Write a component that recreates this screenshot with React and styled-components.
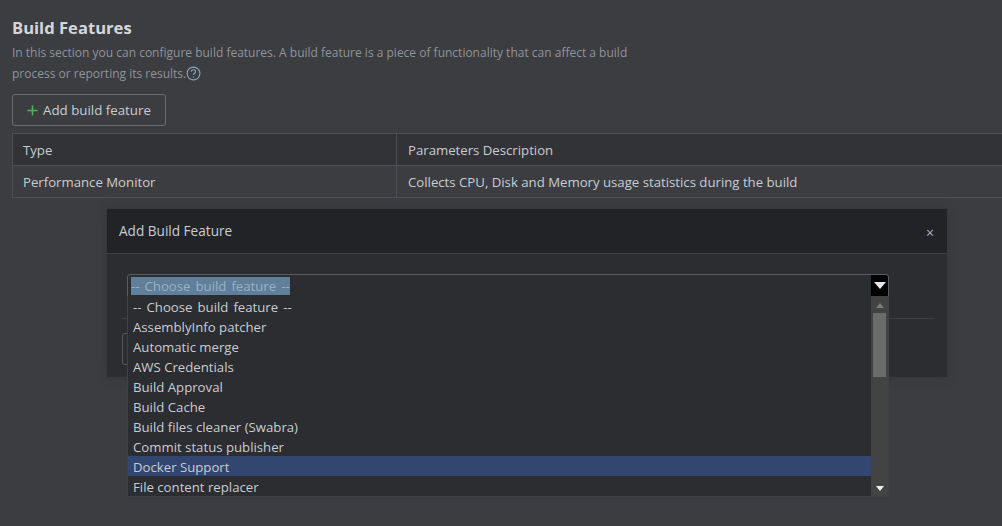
import React from "react";
import styled, { createGlobalStyle } from "styled-components";

const Global = createGlobalStyle`
  html, body { margin: 0; padding: 0; background: #3c3d41; }
  body { font-family: "Open Sans", "Noto Sans", sans-serif; width: 1002px; height: 526px; overflow: hidden; }
  * { box-sizing: border-box; }
`;
const Page = styled.div`position: relative; width: 1002px; height: 526px; padding: 16px 0 0 12px; overflow: hidden; color: #c9ccd2;`;
const Title = styled.h2`margin: 0; font-size: 16.6px; line-height: 24px; font-weight: 700; color: #d4d6db;`;
const Desc = styled.p`margin: 2px 0 0; width: 630px; font-size: 12px; line-height: 21px; color: #8f939a;`;
const Help = styled.svg`display: inline-block; vertical-align: -3px; margin-left: 0;`;
const AddButton = styled.button`
  display: flex; align-items: center; gap: 5px; margin-top: 10px; width: 154px; height: 32px; padding: 0 0 0 14px;
  background: transparent; border: 1px solid #6a6c71; border-radius: 3px; color: #c9ccd2;
  font: 13.3px "Open Sans", sans-serif;
`;
const Table = styled.div`
  margin-top: 7px; width: 1010px; border: 1px solid #4d4f54;
  display: grid; grid-template-columns: 383px 1fr; font-size: 13.2px;
`;
const Cell = styled.div`
  height: ${p => (p.$head ? 32 : 31)}px; padding-left: ${p => (p.$second ? 11 : 10)}px; display: flex; align-items: center;
  background: ${p => (p.$head ? "#323336" : "transparent")};
  border-left: ${p => (p.$second ? "1px solid #4d4f54" : "none")};
  border-bottom: ${p => (p.$head ? "1px solid #4d4f54" : "none")};
  color: #c9ccd2;
`;
const Modal = styled.div`
  position: absolute; left: 107px; top: 209px; width: 840px; height: 168px;
  background: #2b2d30; box-shadow: 0 0 0 1px #36383c, 0 0 12px rgba(0,0,0,.12);
`;
const ModalHead = styled.div`
  height: 45px; background: #222327; border-bottom: 1px solid #3e4045; display: flex; align-items: center; justify-content: space-between;
  padding: 0 13px 1px 12px; font-size: 13.6px; color: #c9ccd2;
`;
const Close = styled.span`font-size: 14px; line-height: 14px; color: #a9b4c0; margin-top: 4px;`;
const ModalBody = styled.div`padding: 64px 12px 0 15px;`;
const Rule = styled.div`height: 1px; background: #3e4045;`;
const GhostButton = styled.div`margin-top: 14px; width: 60px; height: 32px; border: 1px solid #55575c; border-radius: 3px;`;
const SelectBox = styled.div`
  position: absolute; left: 127px; top: 274px; width: 762px; height: 23px;
  background: #2b2d30; border: 1px solid #5a5c60; border-radius: 3px 3px 0 0;
  display: flex; align-items: stretch; justify-content: space-between;
`;
const Selected = styled.span`
  align-self: center; margin-left: 3px; background: #5f7f9b; color: #9fb0bd; font-size: 13.2px; word-spacing: 1.6px; line-height: 18px; height: 18px;
`;
const Arrow = styled.div`width: 17px; background: #000; display: flex; align-items: center; justify-content: center; border-radius: 0 3px 0 0;`;
const ListBox = styled.div`
  position: absolute; left: 127px; top: 296px; width: 762px; height: 201px; display: flex;
  background: #2b2d30; border: 1px solid #3c4248; border-top: none;
`;
const Options = styled.div`flex: 1;`;
const Option = styled.div`
  height: 20px; line-height: 22px; padding-left: 5px; font-size: 13.2px; color: #c9ccd2;
  word-spacing: ${p => (p.$lead ? "1.6px" : "0")};
  background: ${p => (p.$active ? "#33466f" : "transparent")};
`;
const Scrollbar = styled.div`width: 17px; background: #434343; display: flex; flex-direction: column; align-items: center;`;
const ScrollUp = styled.svg`margin-top: 7px; flex: none;`;
const Thumb = styled.div`width: 13px; height: 64px; margin-top: 5px; background: #6b6b6b; flex: none;`;
const ScrollDown = styled.svg`margin-top: auto; margin-bottom: 5px; flex: none;`;

const options = ["-- Choose build feature --", "AssemblyInfo patcher", "Automatic merge", "AWS Credentials", "Build Approval", "Build Cache", "Build files cleaner (Swabra)", "Commit status publisher", "Docker Support", "File content replacer"];

export default function App() {
  return (
    <Page>
      <Global />
      <Title>Build Features</Title>
      <Desc>
        In this section you can configure build features. A build feature is a piece of functionality that can affect a build process or reporting its results.
        <Help width="15" height="15" viewBox="0 0 15 15" fill="none">
          <circle cx="7.5" cy="7.5" r="6.4" stroke="#86a6c0" strokeWidth="1.1" />
          <path d="M5.4 5.8c0-1.3 1-2 2.1-2s2.1.7 2.1 1.9c0 1.6-2.1 1.6-2.1 3.2M7.5 10.4v1.1" stroke="#86a6c0" strokeWidth="1.1" />
        </Help>
      </Desc>
      <AddButton>
        <svg width="11" height="11" viewBox="0 0 11 11"><path d="M5.5 0.5v10M0.5 5.5h10" stroke="#4cb060" strokeWidth="1.6" /></svg>
        Add build feature
      </AddButton>
      <Table>
        <Cell $head>Type</Cell>
        <Cell $head $second>Parameters Description</Cell>
        <Cell>Performance Monitor</Cell>
        <Cell $second>Collects CPU, Disk and Memory usage statistics during the build</Cell>
      </Table>
      <Modal>
        <ModalHead>Add Build Feature<Close>×</Close></ModalHead>
        <ModalBody>
          <Rule />
          <GhostButton />
        </ModalBody>
      </Modal>
      <SelectBox>
        <Selected>-- Choose build feature --</Selected>
        <Arrow><svg width="12" height="7" viewBox="0 0 12 7"><path d="M0 0h12L6 7z" fill="#e8e8e8" /></svg></Arrow>
      </SelectBox>
      <ListBox>
        <Options>
          {options.map((o, i) => <Option key={o} $lead={i === 0} $active={o === "Docker Support"}>{o}</Option>)}
        </Options>
        <Scrollbar>
          <ScrollUp width="8" height="5" viewBox="0 0 8 5"><path d="M4 0l4 5H0z" fill="#7a7a7a" /></ScrollUp>
          <Thumb />
          <ScrollDown width="8" height="5" viewBox="0 0 8 5"><path d="M0 0h8L4 5z" fill="#f0f0f0" /></ScrollDown>
        </Scrollbar>
      </ListBox>
    </Page>
  );
}
